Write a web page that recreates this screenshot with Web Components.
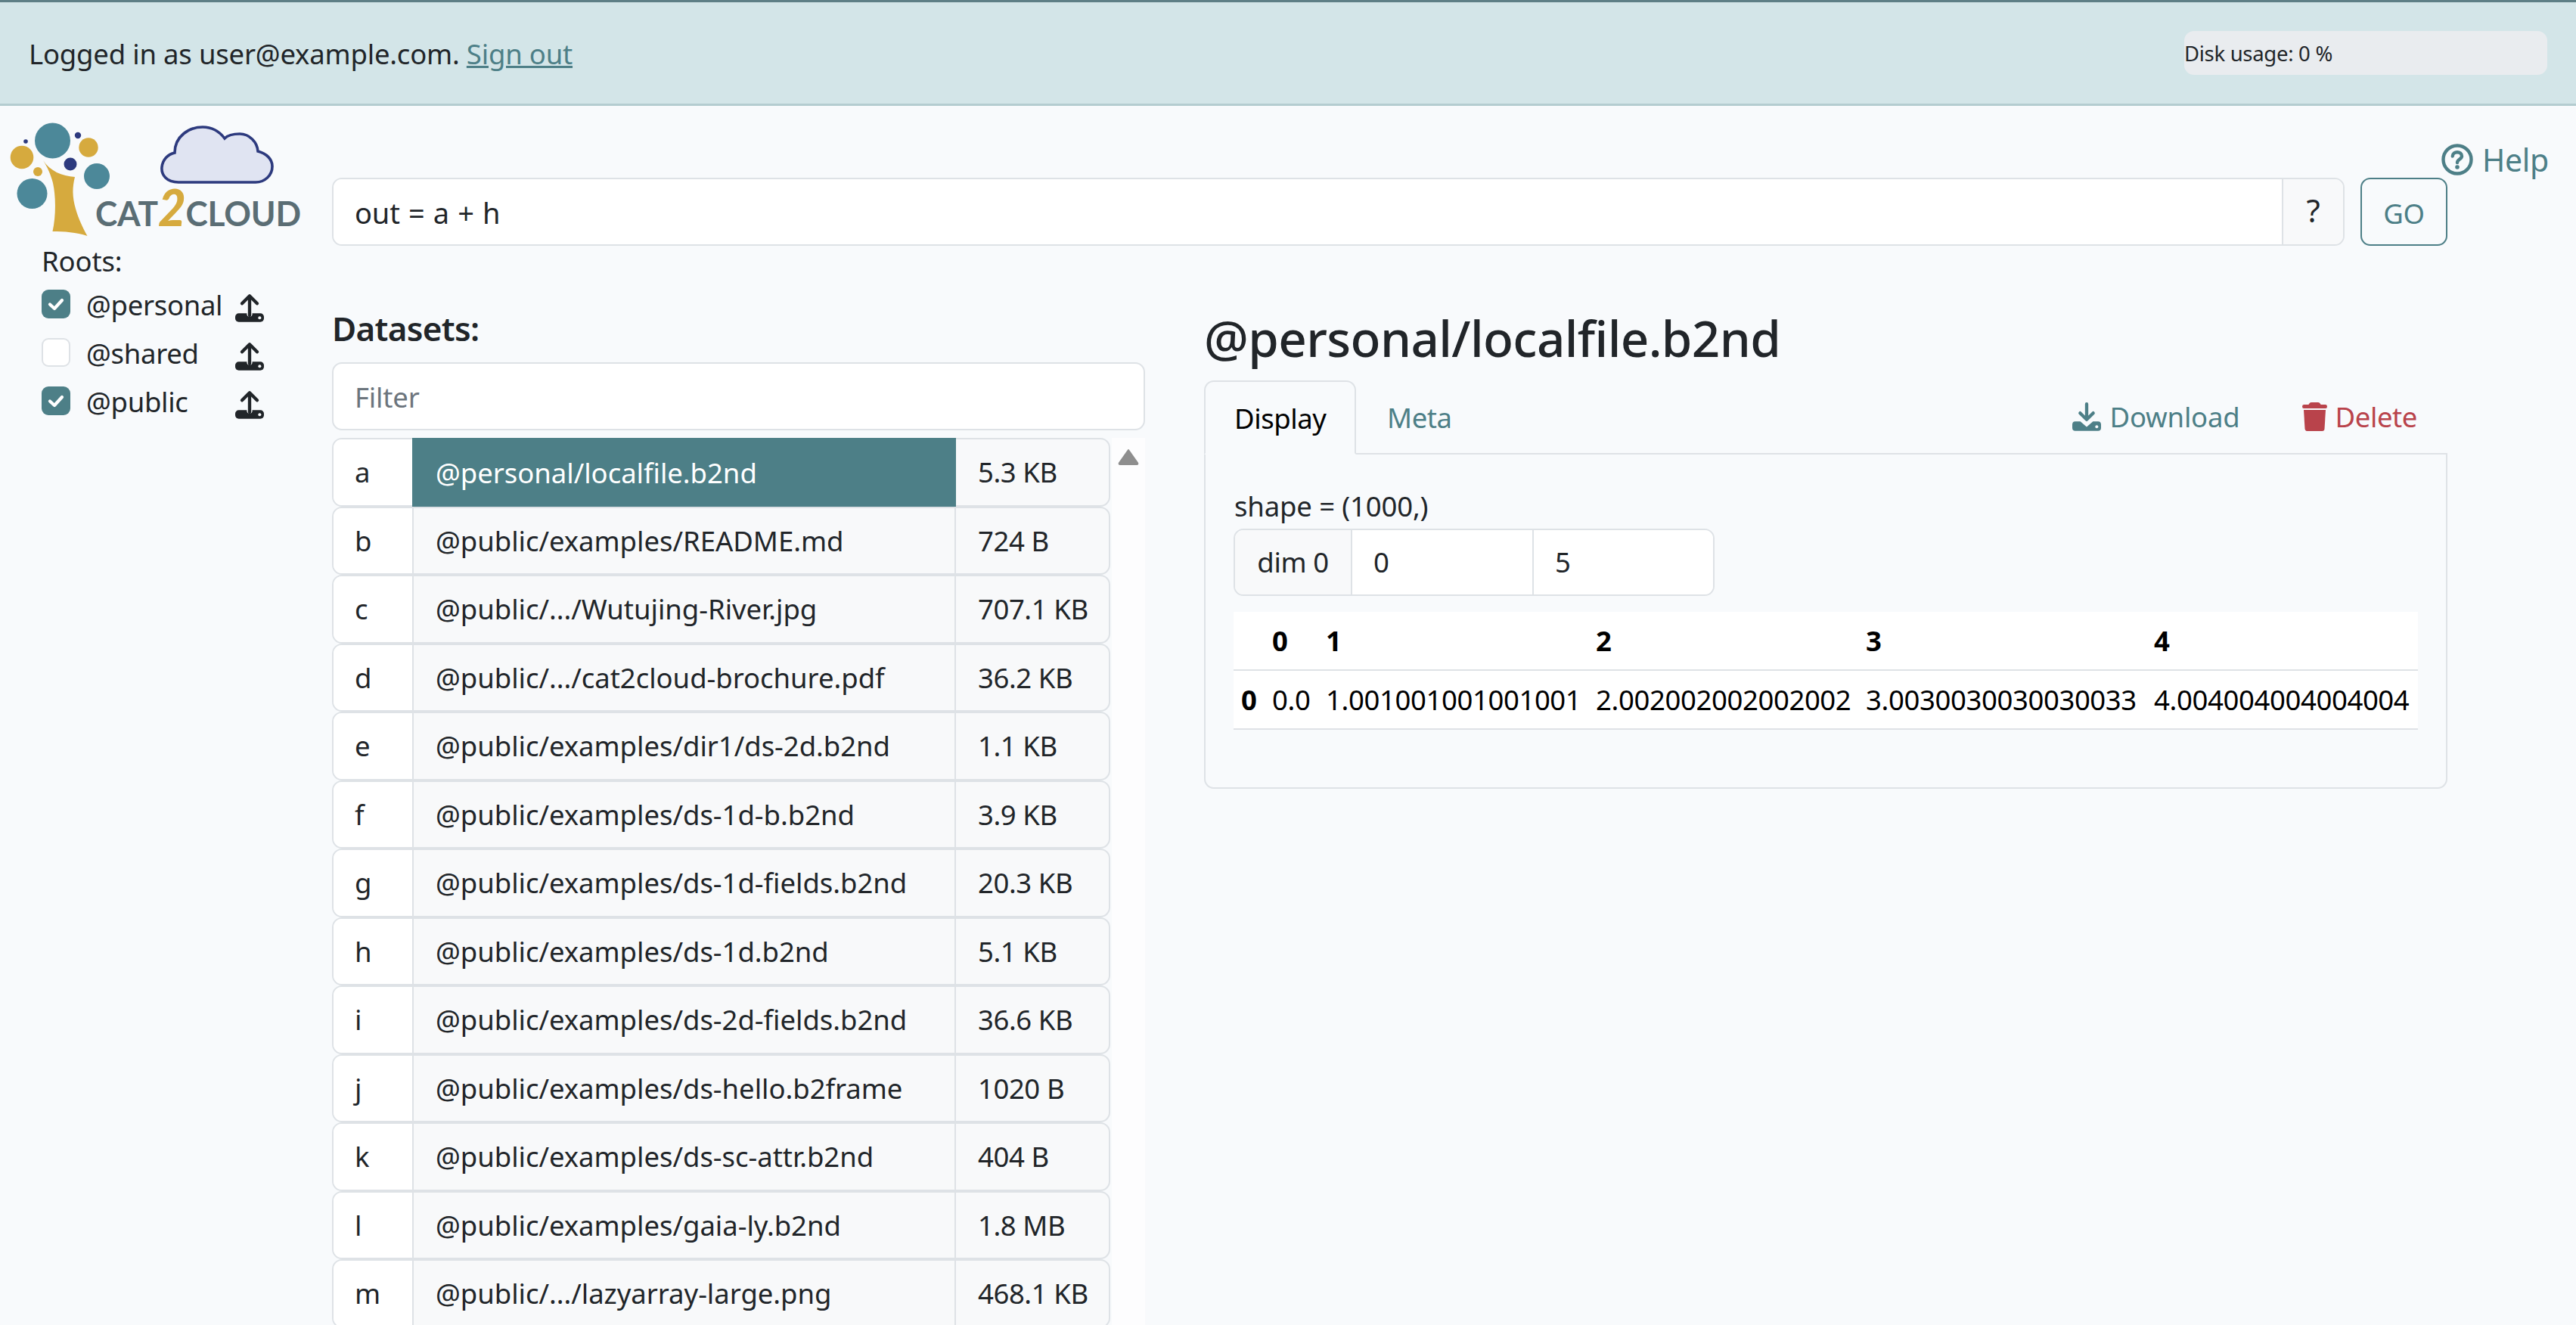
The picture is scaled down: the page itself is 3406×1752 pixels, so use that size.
<!DOCTYPE html>
<html lang="en"><head><meta charset="utf-8"><title>Cat2Cloud</title>
<style>
html,body{margin:0;padding:0;height:100%;background:#f8fafc;}
body{font:36.5px/1.5 "Noto Sans","Open Sans",sans-serif;letter-spacing:-.15px;color:#212529;overflow:hidden;}
</style></head><body>
<c2c-app></c2c-app>
<script>
const UP=`<svg width="38" height="38" viewBox="0 0 114 112"><rect y="78" width="114" height="34" rx="14" fill="currentColor"/><circle cx="57" cy="80" r="11" fill="#f8fafc"/><path d="M57 10V86M27 39L57 9L87 39" fill="none" stroke="currentColor" stroke-width="13" stroke-linecap="round" stroke-linejoin="round"/><circle cx="97" cy="96" r="6" fill="#f8fafc"/></svg>`;
const DOWN=`<svg width="38" height="38" viewBox="0 0 114 113"><path d="M12 75H32L57 97L82 75H102Q114 75 114 88V100Q114 113 102 113H12Q0 113 0 100V88Q0 75 12 75Z" fill="currentColor"/><path d="M57 6V66M31 42L57 68L83 42" fill="none" stroke="currentColor" stroke-width="13" stroke-linecap="round" stroke-linejoin="round"/><circle cx="97" cy="96" r="6" fill="#f8fafc"/></svg>`;
const TRASH=`<svg width="33" height="38" viewBox="0 0 33 38"><path d="M12 0H21Q23 0 24 2L24.500 3H31Q33 3 33 5.500Q33 8 31 8H2Q0 8 0 5.500Q0 3 2 3H8.500L9 2Q10 0 12 0Z" fill="currentColor"/><path d="M2 10H31L29.500 35Q29.300 38 26.500 38H6.500Q3.700 38 3.500 35Z" fill="currentColor"/></svg>`;
const HELP=`<svg width="42" height="42" viewBox="0 0 42 42"><circle cx="21" cy="21" r="18.500" fill="none" stroke="currentColor" stroke-width="4.400"/><path d="M14.800 16.500C15 9.500 27 9.500 27 16.500C27 20.500 21 20.500 21 25" fill="none" stroke="currentColor" stroke-width="4.400" stroke-linecap="round"/><circle cx="21" cy="31" r="2.800" fill="currentColor"/></svg>`;
const LOGO=`<svg width="420" height="170" viewBox="0 0 420 170" style="display:block">
<g fill="#4c8899"><circle cx="69.500" cy="36" r="23.500"/><circle cx="128" cy="83" r="17"/><circle cx="42.500" cy="106" r="20"/></g>
<g fill="#d6aa3e"><circle cx="117" cy="45" r="12.700"/><circle cx="29" cy="58" r="15.300"/><circle cx="50" cy="77" r="6"/>
<path d="M57 62C66 76 82 83 99 84C95 100 96 112 100 126C104 140 110 152 115.500 162C101 157 85 156 69.500 156C74 136 74 110 70 92C67 80 62 70 57 62Z"/></g>
<g fill="#2d3a7e"><circle cx="34" cy="37" r="2.800"/><circle cx="103" cy="29" r="4.200"/><circle cx="93" cy="67" r="8.500"/></g>
<path d="M236 91C220 91 213 81 214 71C215 61 222 54 231 52C231 30 250 18 268 18C281 18 291 25 297 33C302 28 310 27 317 27C330 27 340 38 341 50C352 53 360 60 360 70C360 82 350 91 338 91Z" fill="#e0e4f2" stroke="#2d3a7e" stroke-width="3.600"/>
<text x="126" y="149" font-family="Lato,'Noto Sans',sans-serif" font-size="46" font-weight="700" fill="#5a6d74" textLength="272" lengthAdjust="spacingAndGlyphs">CAT<tspan font-size="66" font-weight="900" font-style="italic" fill="#d6aa3e">2</tspan>CLOUD</text>
</svg>`;
function def(name,html,init){
  customElements.define(name,class extends HTMLElement{
    constructor(){super();const r=this.attachShadow({mode:'open'});r.innerHTML=typeof html==='function'?html(this):html;}
    connectedCallback(){if(typeof html==='function'&&!this._d){this._d=1;this.shadowRoot.innerHTML=html(this);}if(init&&!this._i){this._i=1;init(this);}}
  });
}
def('c2c-topbar',`<style>
:host{display:flex;box-sizing:border-box;height:140px;align-items:center;justify-content:space-between;background:#d3e5e8;border-top:3px solid #5e7f86;border-bottom:3px solid #b4ccd0;padding:0 38px 0 38px;}
a{color:#4d7f87;text-decoration:underline;}
.who{padding-top:2px;letter-spacing:-.2px;}
.disk{box-sizing:border-box;width:480px;height:58px;border-radius:13px;background:#e9ecef;font-size:27.500px;line-height:60px;letter-spacing:-.3px;white-space:nowrap;}
</style><div class="who">Logged in as user@example.com. <a href="#">Sign out</a></div><div class="disk">Disk usage: 0 %</div>`);
def('c2c-logo',`<style>:host{display:block;height:160px;margin-top:-10px;}</style>${LOGO}`);
def('c2c-root-item',h=>`<style>
:host{display:flex;align-items:center;height:64px;}
.box{box-sizing:border-box;width:38px;height:38px;border-radius:9px;flex:none;display:flex;align-items:center;justify-content:center;margin-top:-5px;}
.on{background:#4d7f87;}.off{background:#fff;border:2px solid #dee2e6;}
.name{width:197px;margin-left:21px;flex:none;margin-top:-1px;letter-spacing:-.3px;}
.up{color:#212529;display:flex;margin-top:6px;}
</style><span class="box ${h.hasAttribute('checked')?'on':'off'}">${h.hasAttribute('checked')?'<svg width="24" height="24" viewBox="0 0 24 24"><path d="M4 12.500L10 18L20 7" fill="none" stroke="#fff" stroke-width="4.200" stroke-linecap="round" stroke-linejoin="round"/></svg>':''}</span><span class="name"><slot></slot></span><span class="up">${UP}</span>`);
def('c2c-sidebar',`<style>:host{display:block;width:439px;flex:none;box-sizing:border-box;}
.roots{padding-left:55px;margin-top:7px;}.t{height:55px;line-height:57px;}
</style><c2c-logo></c2c-logo><div class="roots"><div class="t">Roots:</div>
<c2c-root-item checked>@personal</c2c-root-item><c2c-root-item>@shared</c2c-root-item><c2c-root-item checked>@public</c2c-root-item></div>`);
def('c2c-query',`<style>
:host{display:flex;height:90px;gap:21px;}
.group{flex:1;display:flex;box-sizing:border-box;border:2px solid #dee2e6;border-radius:13px;overflow:hidden;}
.in{flex:1;background:#fff;padding:0 28px;line-height:88px;font-size:38px;word-spacing:1.500px;}
.q{width:81px;box-sizing:border-box;border-left:2px solid #dee2e6;text-align:center;line-height:82px;background:#f8f9fa;font-size:42px;}
.go{width:115px;box-sizing:border-box;border:2.500px solid #4d7f87;border-radius:13px;color:#4d7f87;text-align:center;line-height:90px;letter-spacing:-.4px;}
</style><div class="group"><div class="in">out = a + h</div><div class="q">?</div></div><div class="go">GO</div>`);
def('c2c-help',`<style>:host{position:absolute;right:36px;top:181px;display:flex;align-items:center;gap:12px;color:#4d7f87;font-size:41px;letter-spacing:-.3px;line-height:60px;}svg{display:block;}</style>${HELP}<span>Help</span>`);
def('c2c-dataset-row',h=>`<style>
:host{display:grid;grid-template-columns:104px 719px 1fr;box-sizing:border-box;height:90.500px;border:2px solid #dee2e6;border-radius:13px;background:#f8f9fa;white-space:nowrap;position:relative;letter-spacing:-.03px;}
div{padding-left:29px;line-height:86px;}
.k{background:#fff;border-radius:11px 0 0 11px;padding-left:28px;}
.p{border-left:2px solid #dee2e6;border-right:2px solid #dee2e6;}
.sel{background:#4d7f87;color:#fff;border-color:#4d7f87;margin:-2px 0;line-height:92px;height:90.500px;}
.s{letter-spacing:-.42px;padding-left:29px;}
</style><div class="k">${h.getAttribute('k')}</div><div class="p ${h.hasAttribute('selected')?'sel':''}">${h.getAttribute('p')}</div><div class="s">${h.getAttribute('s')}</div>`);
const DS=[['a','@personal/localfile.b2nd','5.3 KB'],['b','@public/examples/README.md','724 B'],['c','@public/.../Wutujing-River.jpg','707.1 KB'],['d','@public/.../cat2cloud-brochure.pdf','36.2 KB'],['e','@public/examples/dir1/ds-2d.b2nd','1.1 KB'],['f','@public/examples/ds-1d-b.b2nd','3.9 KB'],['g','@public/examples/ds-1d-fields.b2nd','20.3 KB'],['h','@public/examples/ds-1d.b2nd','5.1 KB'],['i','@public/examples/ds-2d-fields.b2nd','36.6 KB'],['j','@public/examples/ds-hello.b2frame','1020 B'],['k','@public/examples/ds-sc-attr.b2nd','404 B'],['l','@public/examples/gaia-ly.b2nd','1.8 MB'],['m','@public/.../lazyarray-large.png','468.1 KB']];
def('c2c-datasets',`<style>
:host{display:block;width:1075px;flex:none;}
h2{margin:0 0 20px;font-size:44px;font-weight:600;line-height:50px;letter-spacing:-.7px;padding-top:2px;}
.filter{box-sizing:border-box;height:90px;border:2px solid #dee2e6;border-radius:13px;background:#fff;padding:0 28px;line-height:88px;color:#6c757d;margin-bottom:10px;}
.wrap{display:flex;gap:2px;height:1180px;}
.list{width:1029px;flex:none;overflow:hidden;}
.bar{flex:1;background:#fdfdfe;display:flex;justify-content:center;padding-top:14px;height:1180px;box-sizing:border-box;}
</style><h2>Datasets:</h2><div class="filter">Filter</div><div class="wrap"><div class="list">${DS.map((d,i)=>`<c2c-dataset-row k="${d[0]}" p="${d[1]}" s="${d[2]}"${i?'':' selected'}></c2c-dataset-row>`).join('')}</div><div class="bar"><svg width="28" height="22" viewBox="0 0 28 22"><path d="M14 2L26 19Q27 21 25 21H3Q1 21 2 19Z" fill="#8e8e8e" stroke="#8e8e8e" stroke-width="2" stroke-linejoin="round"/></svg></div></div>`);
def('c2c-table',`<style>
:host{display:block;}
table{border-collapse:collapse;table-layout:fixed;width:1566px;background:#fff;color:#000;letter-spacing:-.38px;}
td,th{padding:0 0 0 10px;text-align:left;border-bottom:2px solid #dee2e6;height:76px;white-space:nowrap;line-height:76px;box-sizing:content-box;overflow:visible;}
th{font-weight:700;}
</style><table><colgroup><col style="width:41px"><col style="width:71px"><col style="width:357px"><col style="width:357px"><col style="width:381px"><col style="width:359px"></colgroup>
<tr><th></th><th>0</th><th>1</th><th>2</th><th>3</th><th>4</th></tr>
<tr><th>0</th><td>0.0</td><td>1.001001001001001</td><td>2.002002002002002</td><td>3.0030030030030033</td><td>4.004004004004004</td></tr></table>`);
def('c2c-detail',`<style>
:host{display:block;flex:1;min-width:0;}
h1{margin:0 0 16px;font-size:65.500px;font-weight:500;line-height:80px;letter-spacing:-.62px;}
.tabs{display:flex;align-items:stretch;height:98px;box-sizing:border-box;border-bottom:2px solid #dee2e6;letter-spacing:-.42px;}
.tab{padding:0 40px;line-height:98px;color:#4d7f87;box-sizing:border-box;}
.active{width:201px;height:98px;background:#f8fafc;color:#000;border:2px solid #dee2e6;border-bottom:2px solid #f8fafc;border-radius:13px 13px 0 0;padding:0 38px;line-height:96px;}
.tab:nth-child(2){padding-left:41px;}
.acts{margin-left:auto;display:flex;gap:82px;padding-right:40px;align-items:center;margin-top:0;}
.act{display:flex;gap:11px;align-items:center;color:#4d7f87;letter-spacing:-.2px;}
.del{color:#b9434b;letter-spacing:-.42px;}
.act span{line-height:50px;}
.panel{box-sizing:border-box;height:442px;border:2px solid #dee2e6;border-top:0;border-radius:0 0 13px 13px;padding:40px 37px 0;}
.shape{line-height:56px;height:58px;padding-left:1px;}
.dims{display:flex;box-sizing:border-box;width:636px;height:89px;border:2px solid #dee2e6;border-radius:13px;overflow:hidden;margin-bottom:21px;letter-spacing:-.42px;}
.dims div{line-height:84px;}
.l{width:153px;box-sizing:border-box;text-align:center;background:#f8f9fa;}
.v{width:240px;box-sizing:border-box;background:#fff;border-left:2px solid #dee2e6;padding-left:28px;}
.v.last{flex:1;padding-left:28px;}
</style><h1>@personal/localfile.b2nd</h1>
<div class="tabs"><div class="tab active">Display</div><div class="tab">Meta</div><div class="acts"><div class="act">${DOWN}<span>Download</span></div><div class="act del">${TRASH}<span>Delete</span></div></div></div>
<div class="panel"><div class="shape">shape = (1000,)</div><div class="dims"><div class="l">dim 0</div><div class="v">0</div><div class="v last">5</div></div><c2c-table></c2c-table></div>`);
def('c2c-app',`<style>
:host{display:block;height:1752px;overflow:hidden;position:relative;}
.body{display:flex;padding-top:20px;}
.main{flex:none;width:2797px;padding-top:75px;}
.cols{display:flex;gap:78px;margin-top:82px;}
</style><c2c-topbar></c2c-topbar><c2c-help></c2c-help><div class="body"><c2c-sidebar></c2c-sidebar><div class="main"><c2c-query></c2c-query><div class="cols"><c2c-datasets></c2c-datasets><c2c-detail></c2c-detail></div></div></div>`);
</script>
</body></html>
